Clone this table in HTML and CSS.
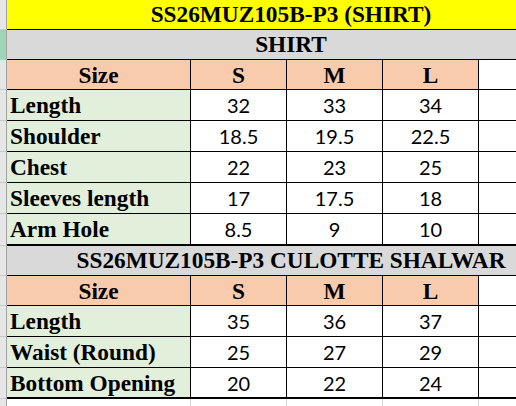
FILE: index.html
```html
<!DOCTYPE html>
<html>
<head>
<meta charset="utf-8">
<link rel="stylesheet" href="styles.css">
</head>
<body>
<div class="view">
<div class="sheet">
  <div class="rh"></div><div class="title yellow">SS26MUZ105B-P3 (SHIRT)</div>
  <div class="rh sel"></div><div class="title grey">SHIRT</div>
  <div class="rh"></div><div class="c head lab">Size</div><div class="c head">S</div><div class="c head">M</div><div class="c head">L</div><div class="c blank"></div>
  <div class="rh"></div><div class="c lab">Length</div><div class="c num">32</div><div class="c num">33</div><div class="c num">34</div><div class="c blank"></div>
  <div class="rh"></div><div class="c lab">Shoulder</div><div class="c num">18.5</div><div class="c num">19.5</div><div class="c num">22.5</div><div class="c blank"></div>
  <div class="rh"></div><div class="c lab">Chest</div><div class="c num">22</div><div class="c num">23</div><div class="c num">25</div><div class="c blank"></div>
  <div class="rh"></div><div class="c lab">Sleeves length</div><div class="c num">17</div><div class="c num">17.5</div><div class="c num">18</div><div class="c blank"></div>
  <div class="rh"></div><div class="c lab thick">Arm Hole</div><div class="c num thick">8.5</div><div class="c num thick">9</div><div class="c num thick">10</div><div class="c blank thick"></div>
  <div class="rh"></div><div class="title grey">SS26MUZ105B-P3 CULOTTE SHALWAR</div>
  <div class="rh"></div><div class="c head lab">Size</div><div class="c head">S</div><div class="c head">M</div><div class="c head">L</div><div class="c blank"></div>
  <div class="rh"></div><div class="c lab">Length</div><div class="c num">35</div><div class="c num">36</div><div class="c num">37</div><div class="c blank"></div>
  <div class="rh"></div><div class="c lab">Waist (Round)</div><div class="c num">25</div><div class="c num">27</div><div class="c num">29</div><div class="c blank"></div>
  <div class="rh"></div><div class="c lab thick">Bottom Opening</div><div class="c num thick">20</div><div class="c num thick">22</div><div class="c num thick">24</div><div class="c blank thick"></div>
  <div class="rh last"></div><div class="g"></div><div class="g"></div><div class="g"></div><div class="g"></div><div class="g"></div>
</div>
</div>
</body>
</html>
```
FILE: styles.css
```css
html, body {
  margin: 0;
  padding: 0;
  background: #ffffff;
  overflow: hidden;
}
.view {
  width: 516px;
  height: 406px;
  overflow: hidden;
}
.sheet {
  display: grid;
  grid-template-columns: 7px 184px 96px 96px 96px 96px;
  grid-template-rows: 30px 30px 30px 31px 31px 31px 31px 32px 30px 30px 31px 31px 31px 7px;
  width: 575px;
}
.sheet > div {
  box-sizing: border-box;
  overflow: hidden;
  white-space: nowrap;
}
.rh {
  background: #e6e6e6;
  border-right: 1px solid #a3a3a3;
  border-bottom: 1px solid #c6c6c6;
}
.rh.sel {
  background: #9fd5b7;
}
.rh.last {
  border-bottom: 0;
}
.title {
  grid-column: 2 / 7;
  border-bottom: 1px solid #000;
  font-family: "Liberation Serif", "Times New Roman", serif;
  font-weight: bold;
  font-size: 23.3px;
  line-height: 29px;
  text-align: center;
  color: #000;
}
.yellow { background: #ffff00; }
.grey { background: #d9d9d9; }
.c {
  border-right: 1px solid #000;
  border-bottom: 1px solid #000;
  line-height: 30px;
  color: #000;
  background: #ffffff;
}
.c.thick {
  border-bottom: 2px solid #000;
}
.head {
  background: #f8cbad;
  font-family: "Liberation Serif", "Times New Roman", serif;
  font-weight: bold;
  font-size: 23.3px;
  text-align: center;
}
.lab {
  background: #e2efda;
  font-family: "Liberation Serif", "Times New Roman", serif;
  font-weight: bold;
  font-size: 23.3px;
  padding-left: 3px;
}
.head.lab {
  background: #f8cbad;
  padding-left: 0;
  text-align: center;
}
.num {
  font-family: Lato, "Liberation Sans", sans-serif;
  font-size: 20px;
  text-align: center;
}
.blank {
  background: #ffffff;
}
.g {
  border-right: 1px solid #d4d4d4;
}
```
